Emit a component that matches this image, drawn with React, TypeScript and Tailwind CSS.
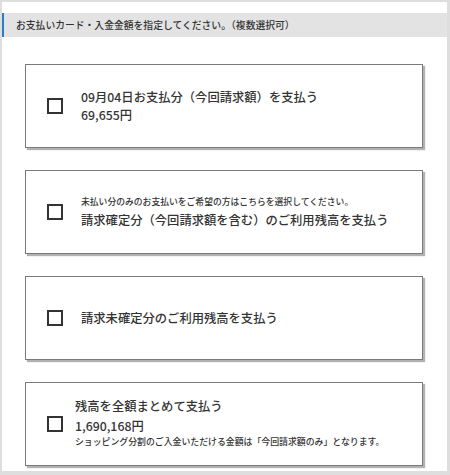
import type { ReactNode } from 'react'

const jp = { fontFamily: '"Noto Sans CJK JP", "Noto Sans", sans-serif' }

// Square checkbox used on each option card
function Box() {
  return <span className="block w-4 h-4 border-2 border-[#333] bg-white shrink-0" />
}

function OptionCard({
  children,
  gap = 'gap-[18px]',
}: {
  children: ReactNode
  gap?: string
}) {
  return (
    <div
      className={`h-[84px] bg-white border border-[#7a7a7a] shadow-[2px_2px_1px_rgba(0,0,0,0.3)] flex items-center pl-[21px] ${gap}`}
    >
      <Box />
      <div className="text-[#333]">{children}</div>
    </div>
  )
}

export default function App() {
  return (
    <div
      className="w-[450px] h-[475px] bg-[#dedede] pt-[2px] pl-[2px] pr-[3px] pb-[4px]"
      style={jp}
    >
      <div className="h-full bg-white pt-[11px]">
        <div className="h-6 bg-[#e3e3e3] border-l-2 border-[#2b7bd0] flex items-center pl-3">
          <span className="text-[9.8px] font-medium text-[#333]">
            お支払いカード・入金金額を指定してください。（複数選択可）
          </span>
        </div>

        <div className="flex flex-col gap-[22px] pt-[27px] pl-[23px] pr-[24px]">
          <OptionCard>
            <p className="text-[12.3px] leading-[18px] font-medium">
              09月04日お支払分（今回請求額）を支払う
            </p>
            <p className="text-[12.3px] leading-[18px] font-medium">69,655円</p>
          </OptionCard>

          <OptionCard>
            <p className="text-[8.8px] leading-[12px] font-medium">
              未払い分のみのお支払いをご希望の方はこちらを選択してください。
            </p>
            <p className="mt-[3px] text-[12.3px] leading-[18px] font-medium">
              請求確定分（今回請求額を含む）のご利用残高を支払う
            </p>
          </OptionCard>

          <OptionCard>
            <p className="text-[12.3px] leading-[18px] font-medium">
              請求未確定分のご利用残高を支払う
            </p>
          </OptionCard>

          <OptionCard gap="gap-3">
            <div className="mb-1">
              <p className="text-[12.3px] leading-[20px] font-medium">
                残高を全額まとめて支払う
              </p>
              <p className="text-[12.3px] leading-[20px] font-medium">1,690,168円</p>
              <p className="text-[8.9px] leading-[12px] font-medium">
                ショッピング分割のご入金いただける金額は「今回請求額のみ」となります。
              </p>
            </div>
          </OptionCard>
        </div>
      </div>
    </div>
  )
}
